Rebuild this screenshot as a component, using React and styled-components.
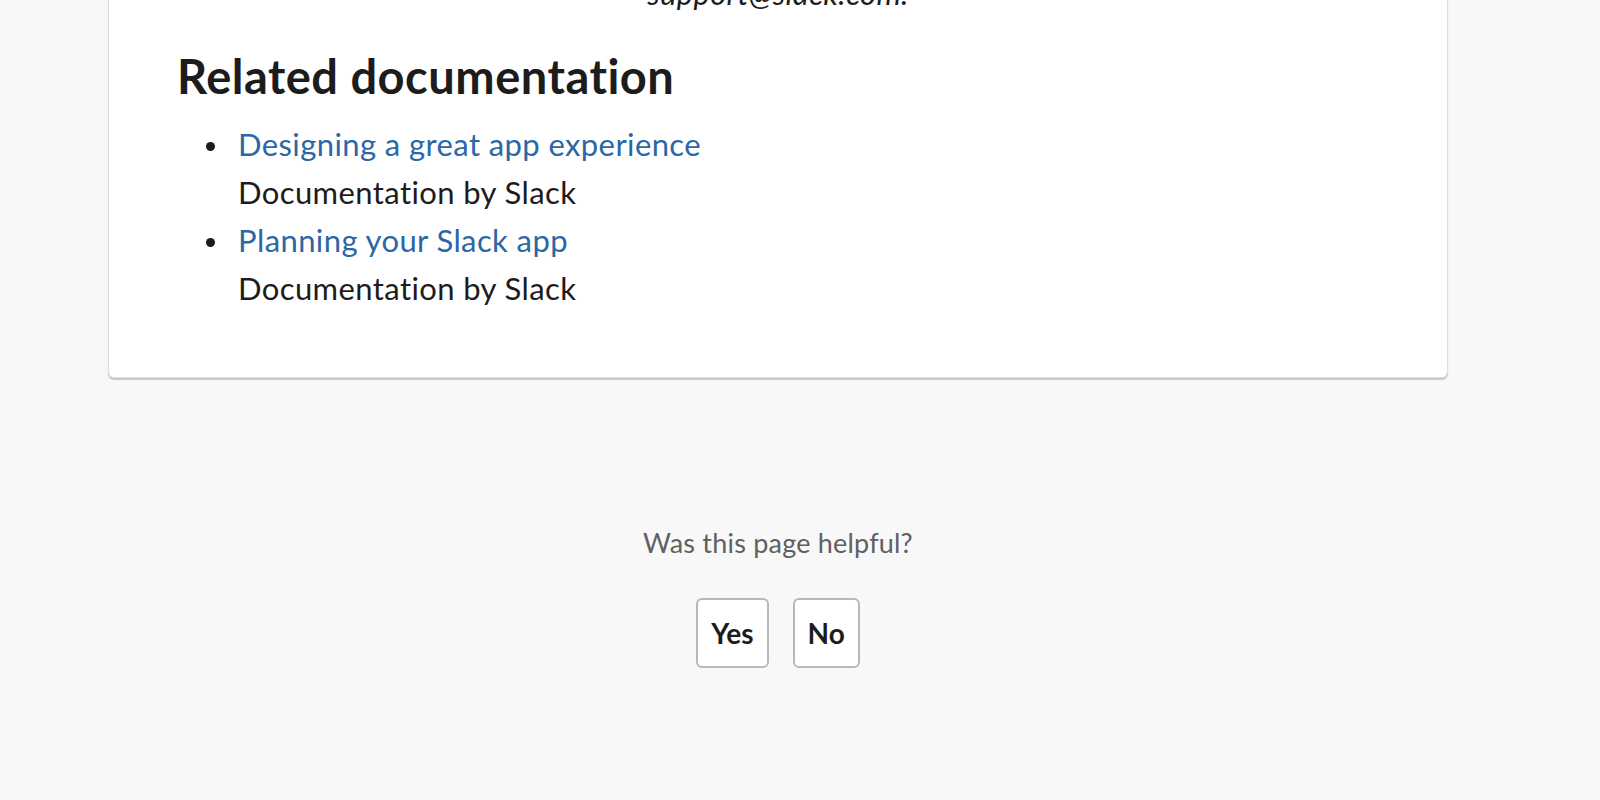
import React from 'react';
import styled, { createGlobalStyle } from 'styled-components';

const GlobalStyle = createGlobalStyle`
  html, body {
    margin: 0;
    padding: 0;
    background-color: #f8f8f8;
    font-family: Lato, 'Open Sans', sans-serif;
    color: #1d1c1d;
    overflow: hidden;
  }
`;

const Main = styled.main`
  width: 1340px;
  margin-left: 108px;
`;

const Card = styled.article`
  margin-top: -30px;
  background-color: #fff;
  border: 1px solid #dddddd;
  border-top: none;
  border-radius: 0 0 6px 6px;
  box-shadow: 0 2px 1px rgba(0, 0, 0, 0.2);
  padding: 0 68px 50px;
`;

const Contact = styled.p`
  margin: 0;
  text-align: center;
  font-size: 31px;
  line-height: 47px;
  letter-spacing: 0.3px;
  font-style: italic;
`;

const Heading = styled.h2`
  margin: 31px 0 16px;
  font-size: 47px;
  line-height: 1.2;
  letter-spacing: 0.5px;
  font-weight: 700;
`;

const DocList = styled.ul`
  margin: 0 0 15px;
  padding-left: 29px;
  list-style: none;
  font-size: 31px;
  line-height: 48px;
  letter-spacing: 0.4px;
`;

const DocItem = styled.li`
  display: grid;
  grid-template-columns: 32px 1fr;

  &::before {
    content: '';
    width: 9px;
    height: 9px;
    margin-top: 22px;
    border-radius: 50%;
    background-color: #1d1c1d;
  }
`;

const DocText = styled.div`
  display: flex;
  flex-direction: column;
  align-items: flex-start;
`;

const DocLink = styled.a`
  color: #2b67a6;
  text-decoration: none;
`;

const DocSource = styled.span`
  color: #1d1c1d;
`;

const Feedback = styled.section`
  display: flex;
  flex-direction: column;
  align-items: center;
  padding-top: 145px;
`;

const Question = styled.p`
  margin: 0 0 34px;
  font-size: 27px;
  line-height: 1.5;
  letter-spacing: 0.2px;
  color: #616061;
`;

const Buttons = styled.div`
  display: flex;
  gap: 24px;
`;

const VoteButton = styled.button`
  box-sizing: border-box;
  height: 70px;
  padding: 0 13px;
  background: #fff;
  border: 2px solid #b8b8b8;
  border-radius: 6px;
  font-family: Lato, sans-serif;
  font-size: 28px;
  font-weight: 700;
  color: #1d1c1d;
  cursor: pointer;
`;

const docs = [
  { title: 'Designing a great app experience', source: 'Documentation by Slack' },
  { title: 'Planning your Slack app', source: 'Documentation by Slack' },
];

const App = () => {
  return (
    <>
      <GlobalStyle />
      <Main>
        <Card>
          <Contact>support@slack.com.</Contact>
          <Heading>Related documentation</Heading>
          <DocList>
            {docs.map((doc) => (
              <DocItem key={doc.title}>
                <DocText>
                  <DocLink href="#">{doc.title}</DocLink>
                  <DocSource>{doc.source}</DocSource>
                </DocText>
              </DocItem>
            ))}
          </DocList>
        </Card>
        <Feedback>
          <Question>Was this page helpful?</Question>
          <Buttons>
            <VoteButton>Yes</VoteButton>
            <VoteButton>No</VoteButton>
          </Buttons>
        </Feedback>
      </Main>
    </>
  );
};

export default App;
